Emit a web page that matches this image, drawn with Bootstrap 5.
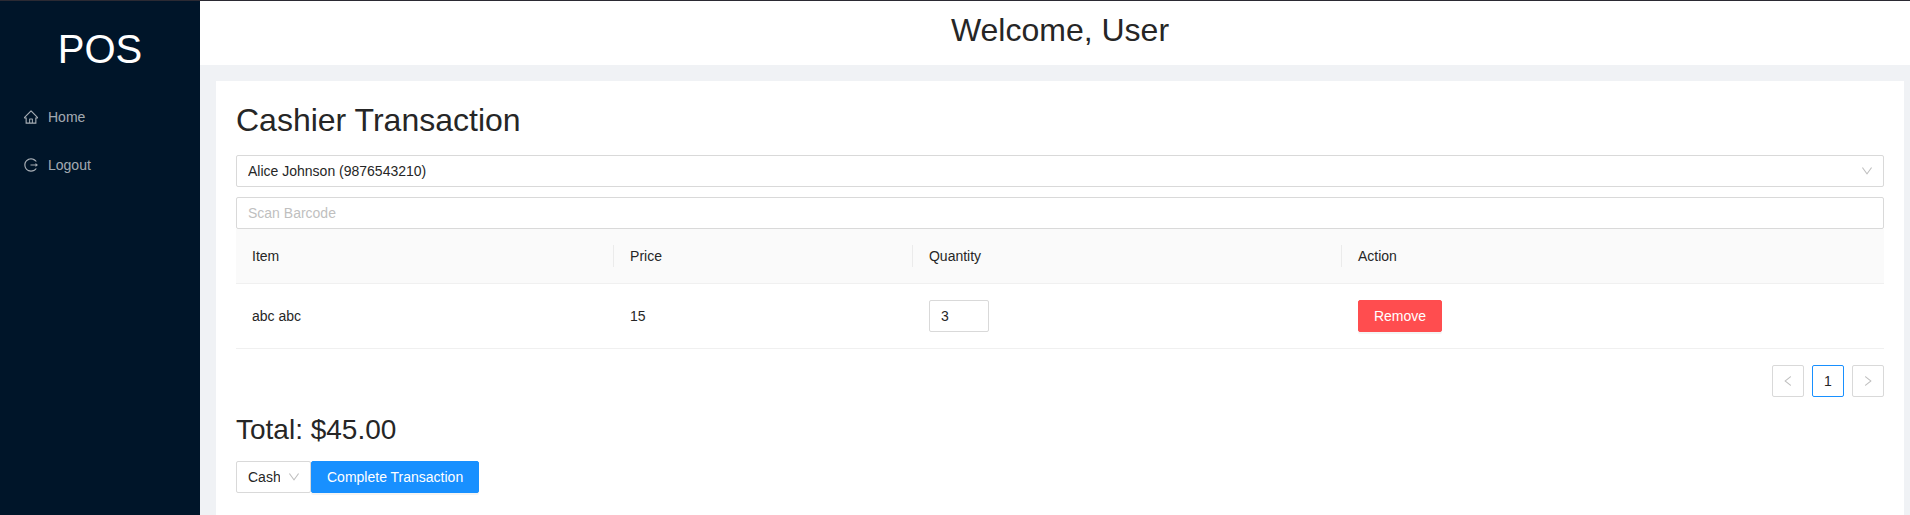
<!DOCTYPE html>
<html lang="en">
<head>
<meta charset="utf-8">
<meta name="viewport" content="width=device-width, initial-scale=1">
<title>POS - Cashier Transaction</title>
<link href="https://cdn.jsdelivr.net/npm/bootstrap@5.3.0/dist/css/bootstrap.min.css" rel="stylesheet">
<style>
  body { font-family: "Liberation Sans", Arial, sans-serif; font-size: 14px; line-height: 22px; color: #262626; background: #f0f2f5; border-top: 1px solid #2b2a33; }
  h1, h2, .brand { font-weight: 400; }
  h1 { font-size: 32px; line-height: 38px; margin-bottom: 16px; }
  h2 { font-size: 28px; line-height: 34px; margin-bottom: 14px; }
  .sider { width: 200px; background: #001529; padding-top: 24px; }
  .brand { font-size: 40px; line-height: 48px; color: #fff; margin-bottom: 24px; }
  .side-link { height: 40px; padding: 0 24px; gap: 10px; color: rgba(255,255,255,.65); text-decoration: none; }
  .side-link:hover { color: #fff; }
  .icon { width: 14px; height: 14px; fill: currentColor; flex: none; }
  .icon-sm { width: 12px; height: 12px; }
  .topbar { height: 64px; padding: 10px 6px 0 16px; background: #fff; }
  .panel { margin: 16px 6px 0 16px; padding: 20px; background: #fff; }
  .form-control, .form-select { height: 32px; padding: 4px 11px; font-size: 14px; line-height: 22px; color: #262626; border: 1px solid #d9d9d9; border-radius: 2px; background-color: #fff; }
  .form-control::placeholder { color: #bfbfbf; }
  .form-select { padding-right: 30px; background-size: 12px 12px; background-position: right 10px center;
    background-image: url("data:image/svg+xml,%3Csvg xmlns='http://www.w3.org/2000/svg' viewBox='64 64 896 896' fill='%23bfbfbf'%3E%3Cpath d='M884 256h-75c-5.1 0-9.9 2.5-12.9 6.6L512 654.2 227.9 262.6c-3-4.1-7.8-6.6-12.9-6.6h-75c-6.5 0-10.3 7.4-6.5 12.7l352.6 486.1c12.8 17.6 39 17.6 51.7 0l352.6-486.1c3.9-5.3.1-12.7-6.4-12.7z'/%3E%3C/svg%3E"); }
  .customer { margin-bottom: 10px; }
  .pay-select { width: 75px; }
  .qty { width: 60px; appearance: textfield; -moz-appearance: textfield; }
  .qty::-webkit-inner-spin-button { -webkit-appearance: none; margin: 0; }
  .items { table-layout: fixed; border-color: #f0f0f0; color: inherit; }
  .items > :not(caption) > * > * { padding: 16px; color: inherit; border-bottom: 1px solid #f0f0f0; }
  .items > thead > tr > th { font-weight: 400; background: #fafafa; }
  .items th:not(:last-child) { background: linear-gradient(#ebebeb, #ebebeb) right center / 1px 22px no-repeat #fafafa !important; }
  .c-item { width: 22.94%; } .c-price { width: 18.14%; } .c-qty { width: 26.03%; }
  .btn { height: 32px; padding: 4px 15px; font-size: 14px; line-height: 22px; border-radius: 2px; box-shadow: 0 2px 0 rgba(0,0,0,.045); }
  .btn-danger { --bs-btn-bg: #ff4d4f; --bs-btn-border-color: #ff4d4f; }
  .btn-primary { --bs-btn-bg: #1890ff; --bs-btn-border-color: #1890ff; }
  .pagination { gap: 8px; margin: 16px 0; }
  .page-link { width: 32px; height: 32px; padding: 0; display: flex; align-items: center; justify-content: center; font-size: 14px; color: #262626; background: #fff; border: 1px solid #d9d9d9; border-radius: 2px !important; margin: 0 !important; }
  .page-item.disabled .page-link { color: #bfbfbf; background: #fff; border-color: #d9d9d9; }
  .page-item.active .page-link { color: #262626; background: #fff; border-color: #1890ff; }
</style>
</head>
<body class="d-flex min-vh-100">
  <aside class="sider flex-shrink-0">
    <div class="brand text-center">POS</div>
    <nav class="d-flex flex-column gap-2" aria-label="Main">
      <a class="side-link d-flex align-items-center" href="#">
        <svg class="icon" viewBox="64 64 896 896" aria-hidden="true"><path d="M946.5 505L560.1 118.8l-25.9-25.9a31.5 31.5 0 00-44.4 0L77.5 505a63.9 63.9 0 00-18.8 46c.4 35.2 29.7 63.3 64.9 63.3h42.5V940h691.8V614.3h43.4c17.1 0 33.2-6.7 45.3-18.8a63.6 63.6 0 0018.7-45.3c0-17-6.7-33.1-18.8-45.2zM568 868H456V664h112v204zm217.9-325.7V868H632V640c0-22.1-17.9-40-40-40H432c-22.1 0-40 17.9-40 40v228H238.1V542.3h-96l370-369.7 23.1 23.1L882 542.3h-96.1z"/></svg>
        <span>Home</span>
      </a>
      <a class="side-link d-flex align-items-center" href="#">
        <svg class="icon" viewBox="64 64 896 896" aria-hidden="true"><path d="M868 732h-70.3c-4.8 0-9.3 2.1-12.3 5.8-7 8.5-14.5 16.7-22.4 24.5a353.84 353.84 0 01-112.7 75.9A352.8 352.8 0 01512.4 866c-47.9 0-94.3-9.4-137.9-27.8a353.84 353.84 0 01-112.7-75.9 353.28 353.28 0 01-76-112.5C167.3 606.2 158 559.9 158 512s9.4-94.2 27.8-137.8c17.8-42.1 43.4-80 76-112.5s70.5-58.1 112.7-75.9c43.6-18.4 90-27.8 137.9-27.8 47.9 0 94.3 9.3 137.9 27.8 42.2 17.8 80.1 43.4 112.7 75.9 7.9 7.9 15.3 16.1 22.4 24.5 3 3.7 7.6 5.8 12.3 5.8H868c6.3 0 10.2-7 6.7-12.3C798 160.5 663.8 81.6 511.3 82 271.7 82.6 79.6 277.1 82 516.4 84.4 751.9 276.2 942 512.4 942c152.1 0 285.7-78.8 362.3-197.7 3.4-5.3-.4-12.3-6.7-12.3zm88.9-226.3L815 393.7c-5.3-4.2-13-.4-13 6.3v76H488c-4.4 0-8 3.6-8 8v56c0 4.4 3.6 8 8 8h314v76c0 6.7 7.8 10.5 13 6.3l141.9-112a8 8 0 000-12.6z"/></svg>
        <span>Logout</span>
      </a>
    </nav>
  </aside>
  <div class="flex-grow-1 d-flex flex-column">
    <header class="topbar text-center"><h1>Welcome, User</h1></header>
    <main class="panel flex-grow-1">
      <h1>Cashier Transaction</h1>
      <select class="form-select customer" aria-label="Customer"><option>Alice Johnson (9876543210)</option></select>
      <input class="form-control" type="text" placeholder="Scan Barcode" aria-label="Scan Barcode">
      <table class="table items align-middle mb-0">
        <colgroup><col class="c-item"><col class="c-price"><col class="c-qty"><col></colgroup>
        <thead><tr><th scope="col">Item</th><th scope="col">Price</th><th scope="col">Quantity</th><th scope="col">Action</th></tr></thead>
        <tbody>
          <tr>
            <td>abc abc</td>
            <td>15</td>
            <td><input class="form-control qty" type="number" value="3" min="1" aria-label="Quantity"></td>
            <td><button class="btn btn-danger d-block" type="button">Remove</button></td>
          </tr>
        </tbody>
      </table>
      <nav aria-label="Items pages">
        <ul class="pagination justify-content-end">
          <li class="page-item disabled"><a class="page-link" href="#" aria-label="Previous"><svg class="icon icon-sm" viewBox="64 64 896 896" aria-hidden="true"><path d="M724 218.3V141c0-6.7-7.7-10.4-12.9-6.3L260.3 486.8a31.86 31.86 0 000 50.3l450.8 352.1c5.3 4.1 12.9.4 12.9-6.3v-77.3c0-4.9-2.3-9.6-6.1-12.6l-360-281 360-281.1c3.8-3 6.1-7.7 6.1-12.6z"/></svg></a></li>
          <li class="page-item active"><a class="page-link" href="#" aria-current="page">1</a></li>
          <li class="page-item disabled"><a class="page-link" href="#" aria-label="Next"><svg class="icon icon-sm" viewBox="64 64 896 896" aria-hidden="true"><path d="M765.7 486.8L314.9 134.7A7.97 7.97 0 00302 141v77.3c0 4.9 2.3 9.6 6.1 12.6l360 281.1-360 281.1c-3.9 3-6.1 7.7-6.1 12.6V883c0 6.7 7.7 10.4 12.9 6.3l450.8-352.1a31.96 31.96 0 000-50.4z"/></svg></a></li>
        </ul>
      </nav>
      <h2>Total: $45.00</h2>
      <div class="d-flex">
        <select class="form-select pay-select" aria-label="Payment method"><option>Cash</option><option>Card</option></select>
        <button class="btn btn-primary" type="button">Complete Transaction</button>
      </div>
    </main>
  </div>
<script src="https://cdn.jsdelivr.net/npm/bootstrap@5.3.0/dist/js/bootstrap.bundle.min.js"></script>
</body>
</html>
